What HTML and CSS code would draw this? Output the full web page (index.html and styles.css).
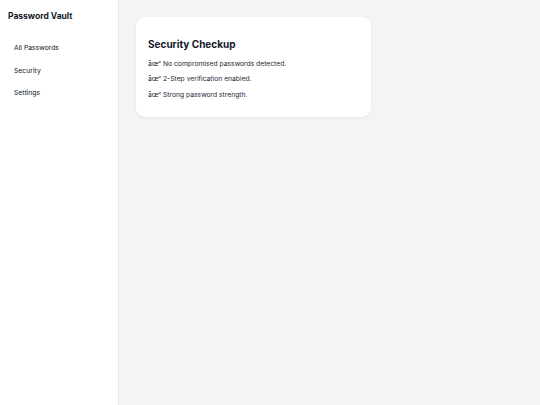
FILE: index.html
```html
<!DOCTYPE html>
<html lang="en">
<head>
<meta charset="utf-8">
<title>Password Vault</title>
<link rel="stylesheet" href="styles.css">
</head>
<body>
<div class="app">
  <aside class="sidebar">
    <h1 class="brand">Password Vault</h1>
    <nav class="nav">
      <a class="nav-item">All Passwords</a>
      <a class="nav-item">Security</a>
      <a class="nav-item">Settings</a>
    </nav>
  </aside>
  <main class="main">
    <section class="card">
      <h2 class="card-title">Security Checkup</h2>
      <p class="check">âœ“ No compromised passwords detected.</p>
      <p class="check">âœ“ 2-Step verification enabled.</p>
      <p class="check">âœ“ Strong password strength.</p>
    </section>
  </main>
</div>
</body>
</html>
```

FILE: styles.css
```css
* { box-sizing: border-box; }
html, body { margin: 0; padding: 0; height: 100%; }
body {
  font-family: Inter, "Noto Sans", sans-serif;
  color: #111827;
  background: #f3f4f6;
}
.app { display: flex; height: 100%; }
.sidebar {
  width: 119px;
  flex: none;
  background: #ffffff;
  border-right: 1px solid #e5e7eb;
  padding: 10px 8px;
}
.brand {
  margin: 0 0 19px;
  font-size: 8.5px;
  font-weight: 700;
  line-height: 12px;
}
.nav { display: flex; flex-direction: column; gap: 8px; }
.nav-item {
  display: block;
  padding: 0 6px;
  font-size: 6.8px;
  line-height: 14.5px;
  color: #111827;
}
.main { flex: 1; padding: 17px 17px; }
.card {
  width: 235px;
  background: #ffffff;
  border-radius: 9px;
  box-shadow: 0 1px 3px rgba(0,0,0,0.06);
  padding: 21px 12px 15px;
}
.card-title {
  margin: 0 0 5.5px;
  font-size: 10px;
  font-weight: 700;
  line-height: 12px;
}
.check {
  margin: 0;
  font-size: 6.75px;
  line-height: 15.5px;
  color: #1f2937;
}
```
